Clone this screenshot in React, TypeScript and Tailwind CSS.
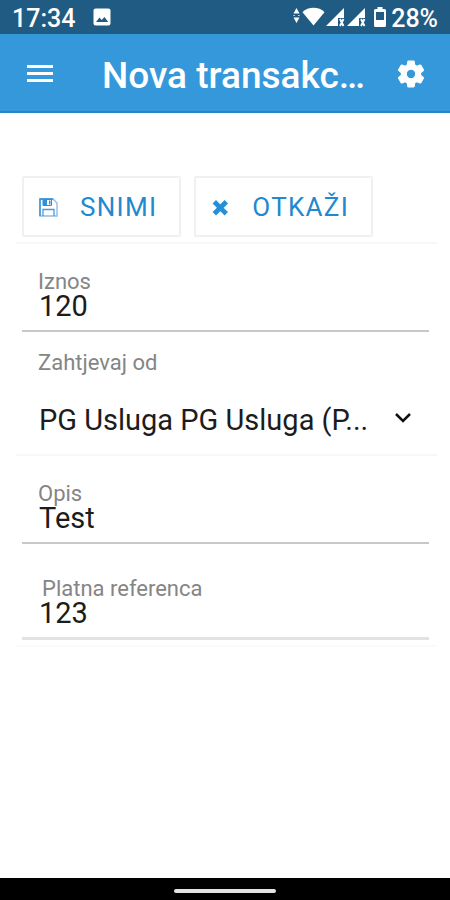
import { useState } from "react";
import type { InputHTMLAttributes } from "react";

function StatusBar() {
  return (
    <div className="h-[34px] shrink-0 bg-[#1f5b82] text-white px-3 flex items-center justify-between">
      <div className="flex items-center gap-[18px]">
        <span className="text-[25px] leading-[28px] font-medium pt-1">17:34</span>
        <svg width="18" height="18" viewBox="0 0 18 18" fill="none" aria-hidden="true">
          <rect x="0.5" y="0.5" width="17" height="17" rx="2" fill="#fff" />
          <path d="M3 14l3.5-4.5 2.2 2.6L11.500 9l3.700 5z" fill="#1f5b82" />
        </svg>
      </div>
      <div className="flex items-center">
        <svg width="81" height="20" viewBox="0 0 81 20" fill="#fff" aria-hidden="true">
          <path d="M3.500 1l3 5.500h-6zM3.500 16l3-5.500h-6zM.5 8h1.200v1H.5zM5.300 8h1.200v1H5.300z" />
          <path d="M20.500 18.500L9.500 5.200C12 2.200 16.500 .8 20.500 .8s8.500 1.400 11 4.400z" />
          <path d="M51 1v10h-6v8H33z" />
          <path d="M72 1v10h-6v8H54z" />
          <path
            d="M47 12l3.500 7M50.500 12L47 19M68 12l3.500 7M71.500 12L68 19"
            stroke="#fff"
            strokeWidth="1.900"
          />
        </svg>
        <svg width="12" height="20" viewBox="0 0 12 20" aria-hidden="true">
          <path
            fillRule="evenodd"
            fill="#fff"
            d="M3.500 0h5v2h2A1.500 1.500 0 0 1 12 3.500v15a1.500 1.500 0 0 1-1.500 1.500h-9A1.500 1.500 0 0 1 0 18.500v-15A1.500 1.500 0 0 1 1.500 2h2zM2 5v8h8V5z"
          />
        </svg>
        <span className="text-[25px] leading-[28px] font-medium pt-1 pl-[5px]">28%</span>
      </div>
    </div>
  );
}

function Header() {
  return (
    <header className="h-[79px] shrink-0 bg-[#3498db] border-b-2 border-[#2585c7] text-white pl-[26px] pr-[23px] pt-[2px] flex items-center">
      <button type="button" aria-label="Meni" className="shrink-0">
        <svg width="28" height="20" viewBox="0 0 28 20" fill="#fff" aria-hidden="true">
          <path d="M1 1h26v3H1zM1 8h26v3H1zM1 15h26v3H1z" />
        </svg>
      </button>
      <h1 className="flex-1 min-w-0 pl-12 pt-1 text-[37px] leading-[44px] font-medium whitespace-nowrap">
        Nova transakc…
      </h1>
      <button type="button" aria-label="Postavke" className="shrink-0">
        <svg width="32" height="32" viewBox="0 0 24 24" fill="#fff" stroke="#fff" strokeWidth="0.900" aria-hidden="true">
          <path d="M19.140 12.940c.04-.3.060-.61.060-.94 0-.32-.02-.64-.07-.94l2.030-1.580a.49.49 0 0 0 .12-.61l-1.920-3.320a.49.49 0 0 0-.59-.22l-2.390.96c-.5-.38-1.030-.7-1.620-.94l-.36-2.540a.48.48 0 0 0-.48-.41h-3.840a.47.47 0 0 0-.47.41l-.36 2.540c-.59.24-1.130.57-1.620.94l-2.390-.96a.48.48 0 0 0-.59.22L2.740 8.870a.47.47 0 0 0 .12.61l2.030 1.580c-.05.3-.09.63-.09.94s.02.64.07.94l-2.030 1.580a.49.49 0 0 0-.12.61l1.920 3.320c.12.22.37.29.59.22l2.390-.96c.5.38 1.030.7 1.620.94l.36 2.540c.05.24.24.41.48.41h3.840c.24 0 .44-.17.47-.41l.36-2.540c.59-.24 1.130-.56 1.620-.94l2.390.96c.22.08.47 0 .59-.22l1.920-3.320a.47.47 0 0 0-.12-.61zM12 15.600A3.600 3.600 0 1 1 12 8.400a3.600 3.600 0 0 1 0 7.200z" />
        </svg>
      </button>
    </header>
  );
}

function SaveIcon() {
  return (
    <svg width="20" height="20" viewBox="0 0 20 20" fill="none" aria-hidden="true">
      <path d="M1 1h13l4 4v13H1z" stroke="#8fbde8" strokeWidth="1.400" />
      <path d="M1 18V1h13" stroke="#2f8fd8" strokeWidth="1.400" />
      <path d="M4 1.500h8.500v6H4z" stroke="#2f8fd8" />
      <path d="M4 1.500h4v6H4zM10 2.500h1.500v4H10z" fill="#2f8fd8" />
      <path d="M4 18v-6.500h11V18" stroke="#4a9bdc" strokeWidth="1.300" />
    </svg>
  );
}

function CancelIcon() {
  return (
    <svg width="20" height="20" viewBox="0 0 20 20" fill="none" aria-hidden="true">
      <path d="M5 5.500l8.600 8.600M13.600 5.500L5 14.100" stroke="#2490d8" strokeWidth="4.800" strokeLinecap="square" />
    </svg>
  );
}

type FieldProps = InputHTMLAttributes<HTMLInputElement> & {
  id: string;
  label: string;
  indent?: boolean;
  light?: boolean;
};

function Field({ id, label, indent, light, ...rest }: FieldProps) {
  return (
    <div
      className={`ml-[6px] mr-2 px-4 pb-[11px] flex flex-col ${
        light ? "border-b-3 border-[#e2e2e2]" : "border-b-2 border-[#c8c8c8]"
      }`}
    >
      <label
        htmlFor={id}
        className={`text-[22px] leading-[22px] text-[#858585] ${indent ? "pl-1" : ""}`}
      >
        {label}
      </label>
      <input
        id={id}
        className="w-full h-[26px] pl-px text-[29px] leading-[26px] text-[#1c1c1c] bg-transparent outline-none"
        {...rest}
      />
    </div>
  );
}

export default function App() {
  const [amount, setAmount] = useState("120");
  const [note, setNote] = useState("Test");
  const [reference, setReference] = useState("123");

  return (
    <div className="min-h-screen flex flex-col bg-white font-['Roboto',sans-serif]">
      <StatusBar />
      <Header />

      <form className="flex-1 pl-4 pr-[13px] pt-[63px]" onSubmit={(e) => e.preventDefault()}>
        <div className="pl-[6px] pb-[5px] flex gap-[13px] border-b-2 border-[#f7f7f7]">
          <button
            type="submit"
            className="h-[61px] pt-[2px] pl-[15px] pr-[22px] flex items-center gap-[21px] border-2 border-[#f0f0f0] rounded-xs text-[26px] tracking-wider text-[#2089cf]"
          >
            <SaveIcon />
            SNIMI
          </button>
          <button
            type="button"
            className="h-[61px] pt-[2px] pl-[15px] pr-[22px] flex items-center gap-[21px] border-2 border-[#f0f0f0] rounded-xs text-[26px] tracking-wider text-[#2089cf]"
          >
            <CancelIcon />
            OTKAŽI
          </button>
        </div>

        <div className="pt-[27px]">
          <Field
            id="amount"
            label="Iznos"
            inputMode="decimal"
            value={amount}
            onChange={(e) => setAmount(e.target.value)}
          />
        </div>

        <div className="pt-[19px] pb-[14px] border-b-2 border-[#f7f7f7]">
          <label htmlFor="source" className="block pl-[22px] text-[22px] leading-6 text-[#858585]">
            Zahtjevaj od
          </label>
          <div className="relative mt-[25px] pl-[22px]">
            <select
              id="source"
              className="w-full h-10 pl-px pr-12 appearance-none text-[29px] leading-10 text-[#1c1c1c] bg-transparent outline-none"
            >
              <option>PG Usluga PG Usluga (P...</option>
            </select>
            <svg
              className="absolute right-6 top-3 pointer-events-none"
              width="20"
              height="12"
              viewBox="0 0 20 12"
              fill="none"
              aria-hidden="true"
            >
              <path d="M3 2l7 7 7-7" stroke="#111" strokeWidth="2.500" />
            </svg>
          </div>
        </div>

        <div className="pt-[27px]">
          <Field id="note" label="Opis" value={note} onChange={(e) => setNote(e.target.value)} />
        </div>

        <div className="pt-[34px] pb-[5px] border-b-2 border-[#fafafa]">
          <Field
            id="reference"
            label="Platna referenca"
            indent
            light
            value={reference}
            onChange={(e) => setReference(e.target.value)}
          />
        </div>
      </form>

      <div className="h-[22px] shrink-0 bg-black flex items-center justify-center pt-[3px]">
        <div className="w-[102px] h-1 rounded-full bg-[#e4e4e4]" />
      </div>
    </div>
  );
}
